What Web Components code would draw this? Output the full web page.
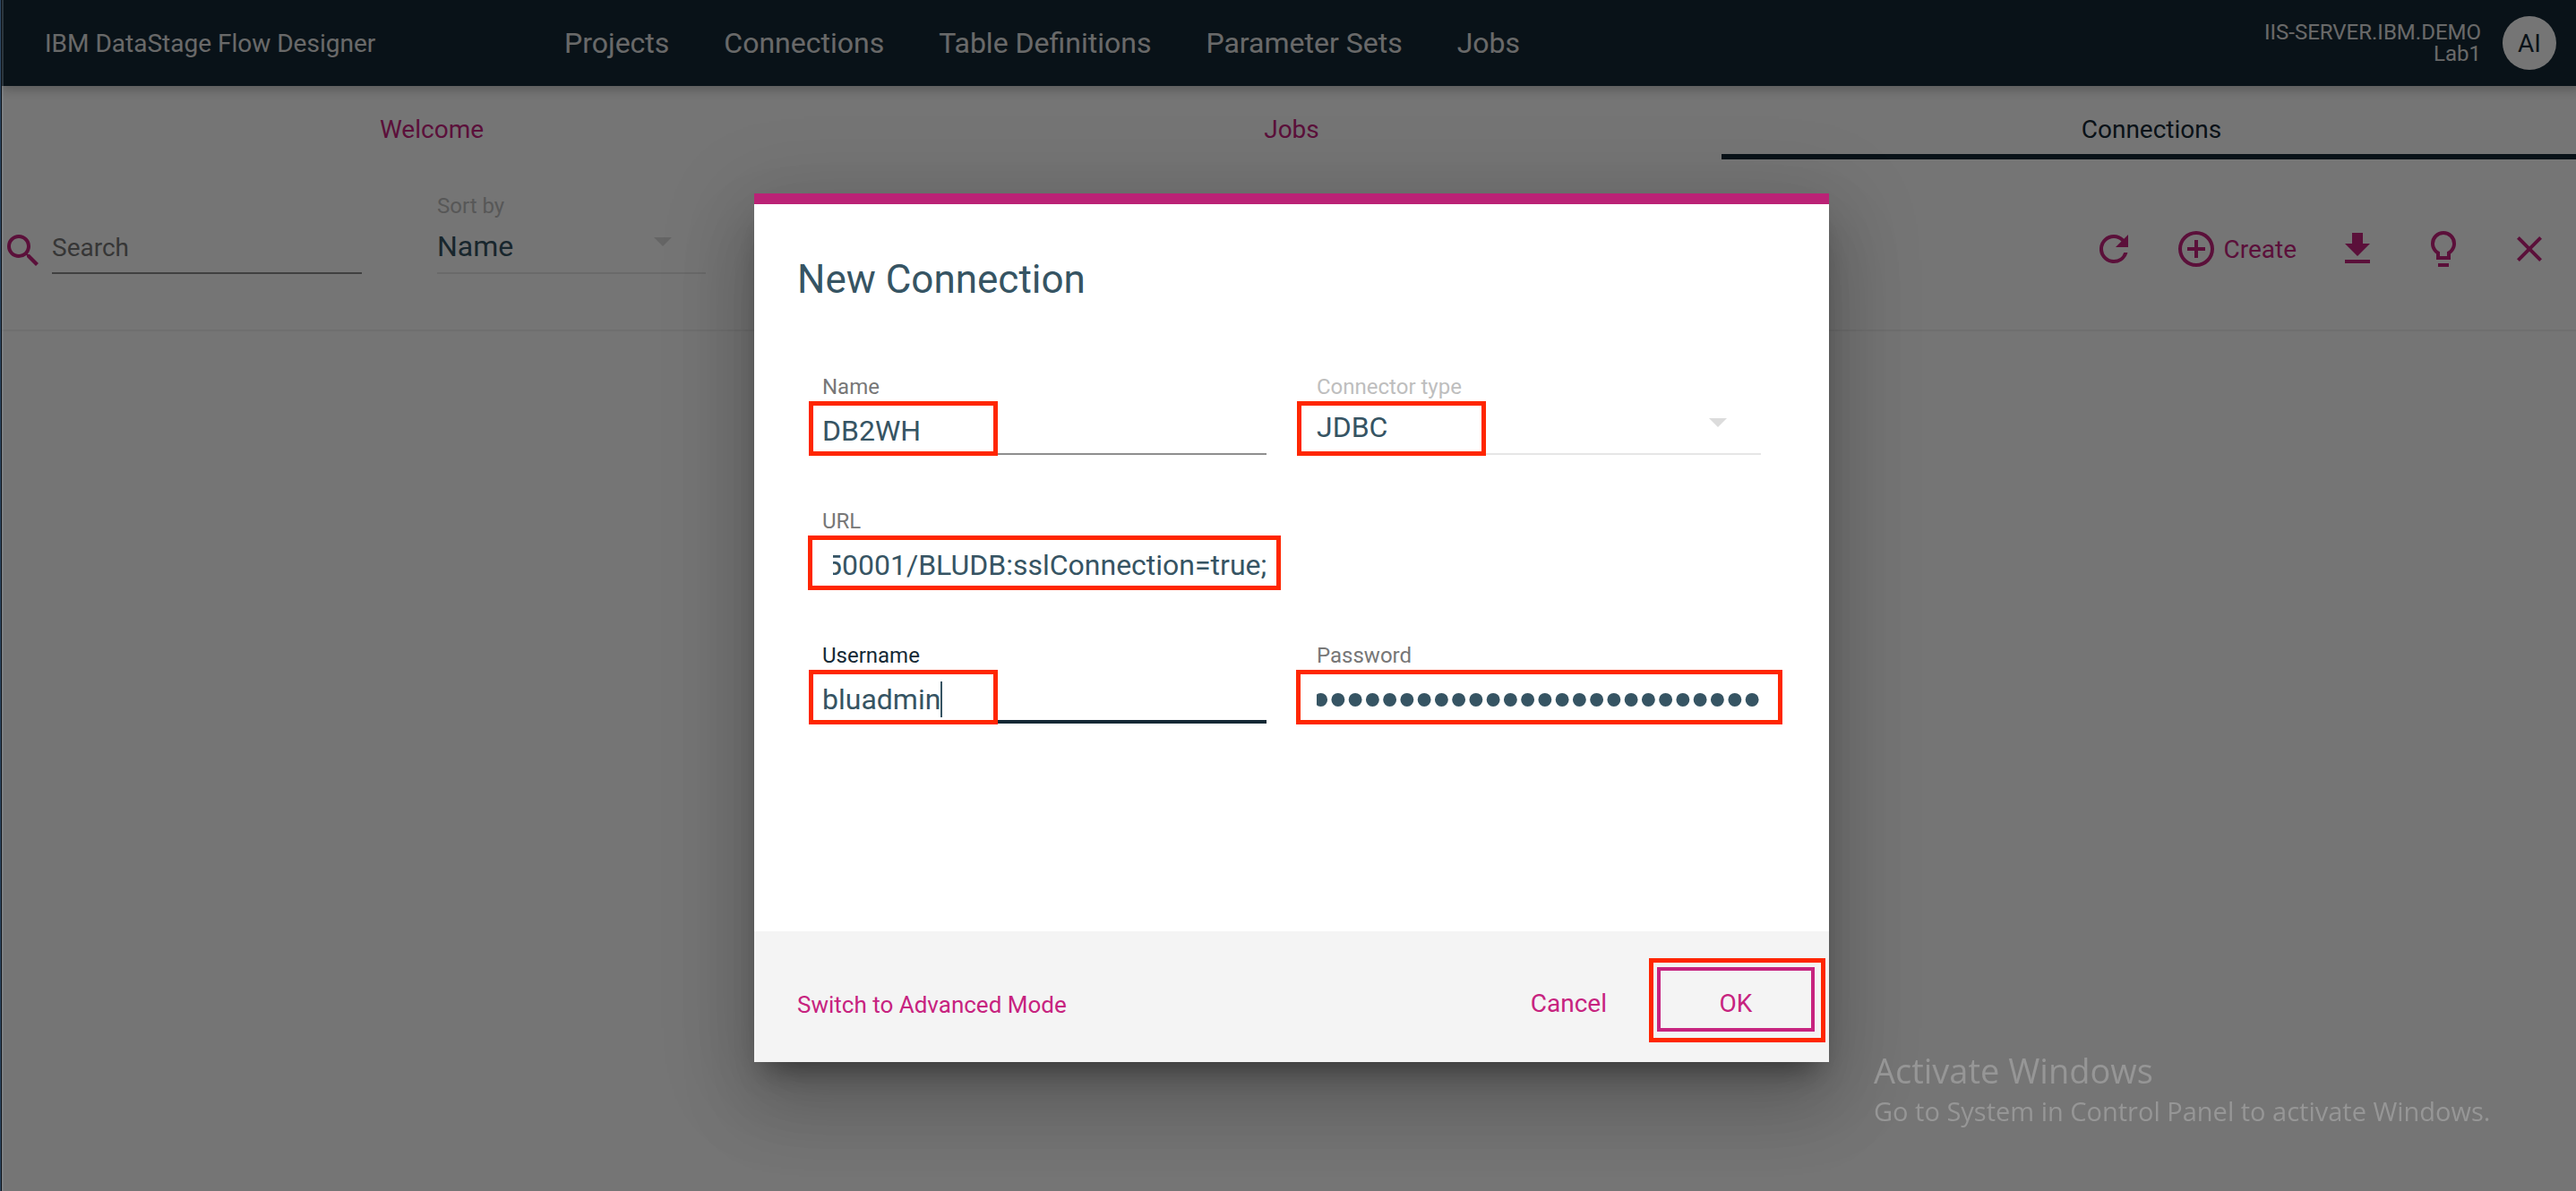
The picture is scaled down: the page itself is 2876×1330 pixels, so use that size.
<!DOCTYPE html>
<html lang="en">
<head>
<meta charset="utf-8">
<title>IBM DataStage Flow Designer</title>
<style>
  html, body { margin: 0; min-height: 100vh; background: #fff; }
  body {
    overflow: hidden;
    font-family: Roboto, "Liberation Sans", sans-serif;
    --navy: #152935;
    --slate: #365463;
    --magenta: #c7237f;
    --mark: #ff2600;
  }
</style>
</head>
<body>
<flow-app>
  <flow-header slot="header" brand="IBM DataStage Flow Designer" server="IIS-SERVER.IBM.DEMO" project="Lab1" initials="AI">
    <a href="#projects">Projects</a>
    <a href="#connections">Connections</a>
    <a href="#tables">Table Definitions</a>
    <a href="#parameters">Parameter Sets</a>
    <a href="#jobs">Jobs</a>
  </flow-header>
  <flow-tabs>
    <flow-tab>Welcome</flow-tab>
    <flow-tab>Jobs</flow-tab>
    <flow-tab selected>Connections</flow-tab>
  </flow-tabs>
  <flow-toolbar></flow-toolbar>
  <flow-dialog slot="dialog" heading="New Connection">
    <flow-field label="Name" value="DB2WH" mark="short"></flow-field>
    <flow-select label="Connector type" value="JDBC" mark></flow-select>
    <flow-field label="URL" value="50001/BLUDB:sslConnection=true;" mark="full" scrolled wide></flow-field>
    <flow-field label="Username" value="bluadmin" mark="short" active></flow-field>
    <flow-field label="Password" type="password" value="xxxxxxxxxxxxxxxxxxxxxxxxxx" mark="secret" scrolled></flow-field>
    <flow-button slot="start" compact>Switch to Advanced Mode</flow-button>
    <flow-button slot="end">Cancel</flow-button>
    <flow-button slot="end" outlined mark>OK</flow-button>
  </flow-dialog>
</flow-app>
<windows-watermark></windows-watermark>
<window-edge></window-edge>

<script>
const define = (name, render, after) => customElements.define(name, class extends HTMLElement {
  connectedCallback() {
    if (this.shadowRoot) return;
    const root = this.attachShadow({ mode: 'open' });
    root.innerHTML = '<style>*{box-sizing:border-box}button,input,select{font:inherit;color:inherit;background:none;border:0;border-radius:0;margin:0;padding:0;outline:0}a{color:inherit;text-decoration:none}</style>' + render(this);
    if (after) after(this, root);
  }
});
const attr = (el, name) => el.getAttribute(name) || '';

const ICONS = {
  search: '<path d="M9.5 3A6.5 6.5 0 0 1 16 9.5c0 1.61-.59 3.09-1.56 4.23l.27.27h.79l5 5-1.5 1.5-5-5v-.79l-.27-.27A6.516 6.516 0 0 1 9.5 16a6.5 6.5 0 0 1 0-13m0 2C7 5 5 7 5 9.5S7 14 9.5 14 14 12 14 9.5 12 5 9.5 5z"/>',
  refresh: '<path d="M17.65 6.35A7.958 7.958 0 0 0 12 4a8 8 0 1 0 7.73 10h-2.08A5.99 5.99 0 0 1 12 18a6 6 0 1 1 0-12c1.66 0 3.14.69 4.22 1.78L13 11h7V4l-2.35 2.35z"/>',
  add: '<path d="M12 20c-4.41 0-8-3.59-8-8s3.59-8 8-8 8 3.59 8 8-3.59 8-8 8m0-18a10 10 0 1 0 0 20 10 10 0 0 0 0-20m1 5h-2v4H7v2h4v4h2v-4h4v-2h-4V7z"/>',
  download: '<path d="M5 20h14v-2H5v2zM19 9h-4V3H9v6H5l7 7 7-7z"/>',
  bulb: '<path d="M12 2a7 7 0 0 1 7 7c0 2.38-1.19 4.47-3 5.74V18H8v-3.26C6.19 13.47 5 11.38 5 9a7 7 0 0 1 7-7M9 20h6v2H9v-2zM12 4a5 5 0 0 0-5 5c0 2.05 1.23 3.81 3 4.58V16h4v-2.42c1.77-.77 3-2.53 3-4.58a5 5 0 0 0-5-5z"/>',
  close: '<path d="M19 6.41 17.59 5 12 10.59 6.41 5 5 6.41 10.59 12 5 17.59 6.41 19 12 13.41 17.59 19 19 17.59 13.41 12z"/>'
};

define('flow-icon', el => `
  <style>:host{display:block;flex:none;width:48px;height:48px;color:var(--magenta)} svg{display:block;width:100%;height:100%;fill:currentColor}</style>
  <svg viewBox="0 0 24 24" aria-hidden="true">${ICONS[attr(el, 'name')]}</svg>`);

/* Page shell: header, content, and a scrim that carries the dialog. */
define('flow-app', () => `
  <style>
    :host{display:flex;flex-direction:column;min-height:100vh;width:calc(100% + 4px);margin-left:2px;position:relative}
    .scrim{position:absolute;inset:0;z-index:5;background:rgba(0,0,0,.54);display:flex;align-items:flex-start;justify-content:center;padding-top:216px}
  </style>
  <slot name="header"></slot><main><slot></slot></main>
  <div class="scrim"><slot name="dialog"></slot></div>`);

define('flow-header', el => `
  <style>
    :host{display:flex;align-items:center;height:96px;padding:0 28px 0 48px;background:var(--navy);color:#e4e4e4;position:relative;z-index:1;box-shadow:0 4px 12px rgba(0,0,0,.25)}
    .brand{flex:none;width:580px;font-size:28px}
    nav{display:flex;gap:61px;flex:1;font-size:32px;white-space:nowrap}
    ::slotted(a){color:inherit;text-decoration:none}
    .who{font-size:24px;line-height:24px;text-align:right}
    .avatar{width:60px;height:60px;margin-left:24px;border-radius:50%;background:#fff;color:var(--navy);font-size:28px}
  </style>
  <div class="brand">${attr(el, 'brand')}</div>
  <nav><slot></slot></nav>
  <div class="who"><div>${attr(el, 'server')}</div><div>${attr(el, 'project')}</div></div>
  <button class="avatar">${attr(el, 'initials')}</button>`);

define('flow-tabs', () => `<style>:host{display:flex}</style><slot></slot>`);

define('flow-tab', () => `
  <style>
    :host{display:block;flex:1}
    button{display:block;width:100%;padding:35px 0 13px;font-size:28px;line-height:28px;color:var(--magenta);border-bottom:6px solid transparent}
    :host([selected]) button{color:var(--navy);border-color:var(--navy)}
  </style>
  <button role="tab"><slot></slot></button>`);

define('flow-toolbar', () => `
  <style>
    :host{display:flex;align-items:flex-end;padding:38px 34px 62px 0;border-bottom:2px solid #f1f1f1}
    .search{display:flex;align-items:flex-end;gap:8px;width:402px;margin-right:84px}
    .search flow-icon{margin-bottom:2px}
    .search input{flex:1;min-width:0;height:62px;padding-top:4px;font-size:28px;color:#555;border-bottom:2px solid #8c8c8c}
    .search input::placeholder{color:#777;opacity:1}
    flow-select{width:300px}
    .actions{display:flex;gap:48px;margin:0 0 4px auto}
    button{display:flex;align-items:center;gap:6px;font-size:28px;color:var(--magenta)}
    .labelled{margin:0 -4px}
  </style>
  <div class="search"><flow-icon name="search"></flow-icon><input type="text" aria-label="Search" placeholder="Search"></div>
  <flow-select label="Sort by" value="Name"></flow-select>
  <div class="actions">
    <button aria-label="Refresh"><flow-icon name="refresh"></flow-icon></button>
    <button class="labelled"><flow-icon name="add"></flow-icon>Create</button>
    <button aria-label="Download"><flow-icon name="download"></flow-icon></button>
    <button aria-label="Tips"><flow-icon name="bulb"></flow-icon></button>
    <button aria-label="Close"><flow-icon name="close"></flow-icon></button>
  </div>`);

const FIELD = `
  :host{display:block;position:relative;color:var(--slate)}
  label{display:block;font-size:24px;line-height:28px;color:#777}
  .frame{position:absolute;top:30px;left:-15px;width:211px;height:61px;border:5px solid var(--mark);pointer-events:none}`;

define('flow-select', el => `
  <style>${FIELD}
    label{color:#bebebe}
    .box{display:flex;align-items:center;height:62px;border-bottom:2px solid #e6e6e6}
    select{appearance:none;width:100%;height:60px;padding-top:2px;font-size:32px}
    svg{width:20px;height:10px;margin:0 38px 8px -58px;fill:#dcdcdc;pointer-events:none}
    .frame{left:-22px}
  </style>
  <label for="s">${attr(el, 'label')}</label>
  <div class="box"><select id="s"><option>${attr(el, 'value')}</option></select><svg viewBox="0 0 20 10"><path d="M0 0h20L10 10z"/></svg></div>
  ${el.hasAttribute('mark') ? '<div class="frame"></div>' : ''}`);

define('flow-field', el => `
  <style>${FIELD}
    .box{display:flex;align-items:center;height:62px;padding-top:10px;border-bottom:2px solid #8f8f8f;font-size:32px}
    input{width:100%;height:50px}
    input[type=password]{font-family:"Liberation Sans",sans-serif;font-size:55px}
    :host([wide]) input{margin-left:12px}
    :host([active]) label{color:var(--navy)}
    :host([active]) .box{border-color:var(--navy);box-shadow:inset 0 -2px var(--navy)}
    :host([active]) input{width:auto;field-sizing:content}
    .caret{width:2px;height:40px;background:var(--slate)}
    .full{left:-16px;width:528px}
    .secret{left:-23px;width:543px}
  </style>
  <label for="f">${attr(el, 'label')}</label>
  <div class="box"><input id="f" type="${attr(el, 'type') || 'text'}" value="${attr(el, 'value')}">${el.hasAttribute('active') ? '<span class="caret"></span>' : ''}</div>
  <div class="frame ${attr(el, 'mark')}"></div>`,
  (el, root) => {
    const input = root.querySelector('input');
    if (el.hasAttribute('scrolled')) {
      const toEnd = () => { input.scrollLeft = input.scrollWidth; };
      toEnd();
      requestAnimationFrame(toEnd);
      addEventListener('load', toEnd);
    }
  });

define('flow-button', el => `
  <style>
    :host{display:block;position:relative;color:var(--magenta)}
    button{display:block;height:72px;padding-top:8px;font-size:28px;white-space:nowrap}
    :host([compact]) button{padding-top:12px;font-size:26px}
    :host([outlined]) button{width:176px;border:4px solid var(--magenta)}
    .frame{position:absolute;inset:-10px -12px -12px -9px;border:5px solid var(--mark);pointer-events:none}
  </style>
  <button><slot></slot></button>${el.hasAttribute('mark') ? '<div class="frame"></div>' : ''}`);

define('flow-dialog', el => `
  <style>
    :host{display:block;width:1200px;max-width:100%;background:#fff;border-top:12px solid #bb2276;
      box-shadow:0 48px 76px 6px rgba(0,0,0,.14),0 18px 92px 16px rgba(0,0,0,.12),0 22px 30px -14px rgba(0,0,0,.4)}
    h1{margin:0;padding:60px 48px 82px;font-size:44px;line-height:48px;font-weight:400;color:var(--slate)}
    form{display:grid;grid-template-columns:1fr 1fr;gap:60px 56px;padding:0 76px 232px}
    ::slotted([wide]),::slotted([active]){grid-column:1}
    footer{display:flex;align-items:center;gap:56px;padding:40px 16px 34px 48px;background:#f4f4f4}
    .space{flex:1}
  </style>
  <h1>${attr(el, 'heading')}</h1>
  <form><slot></slot></form>
  <footer><slot name="start"></slot><span class="space"></span><slot name="end"></slot></footer>`);

define('windows-watermark', () => `
  <style>
    :host{position:fixed;right:104px;bottom:69px;width:680px;z-index:9;color:#969696;font-family:"Open Sans","Noto Sans",sans-serif;pointer-events:none;white-space:nowrap}
    .title{font-size:38px;line-height:52px}
    .text{font-size:29px;line-height:40px}
  </style>
  <div class="title">Activate Windows</div><div class="text">Go to System in Control Panel to activate Windows.</div>`);

define('window-edge', () => `
  <style>:host{position:fixed;left:0;top:0;bottom:0;width:4px;z-index:9;background:linear-gradient(90deg,#2f4a66 1px,#0b1016 1px 2px,rgba(150,160,170,.25) 2px)}</style>`);
</script>
</body>
</html>
